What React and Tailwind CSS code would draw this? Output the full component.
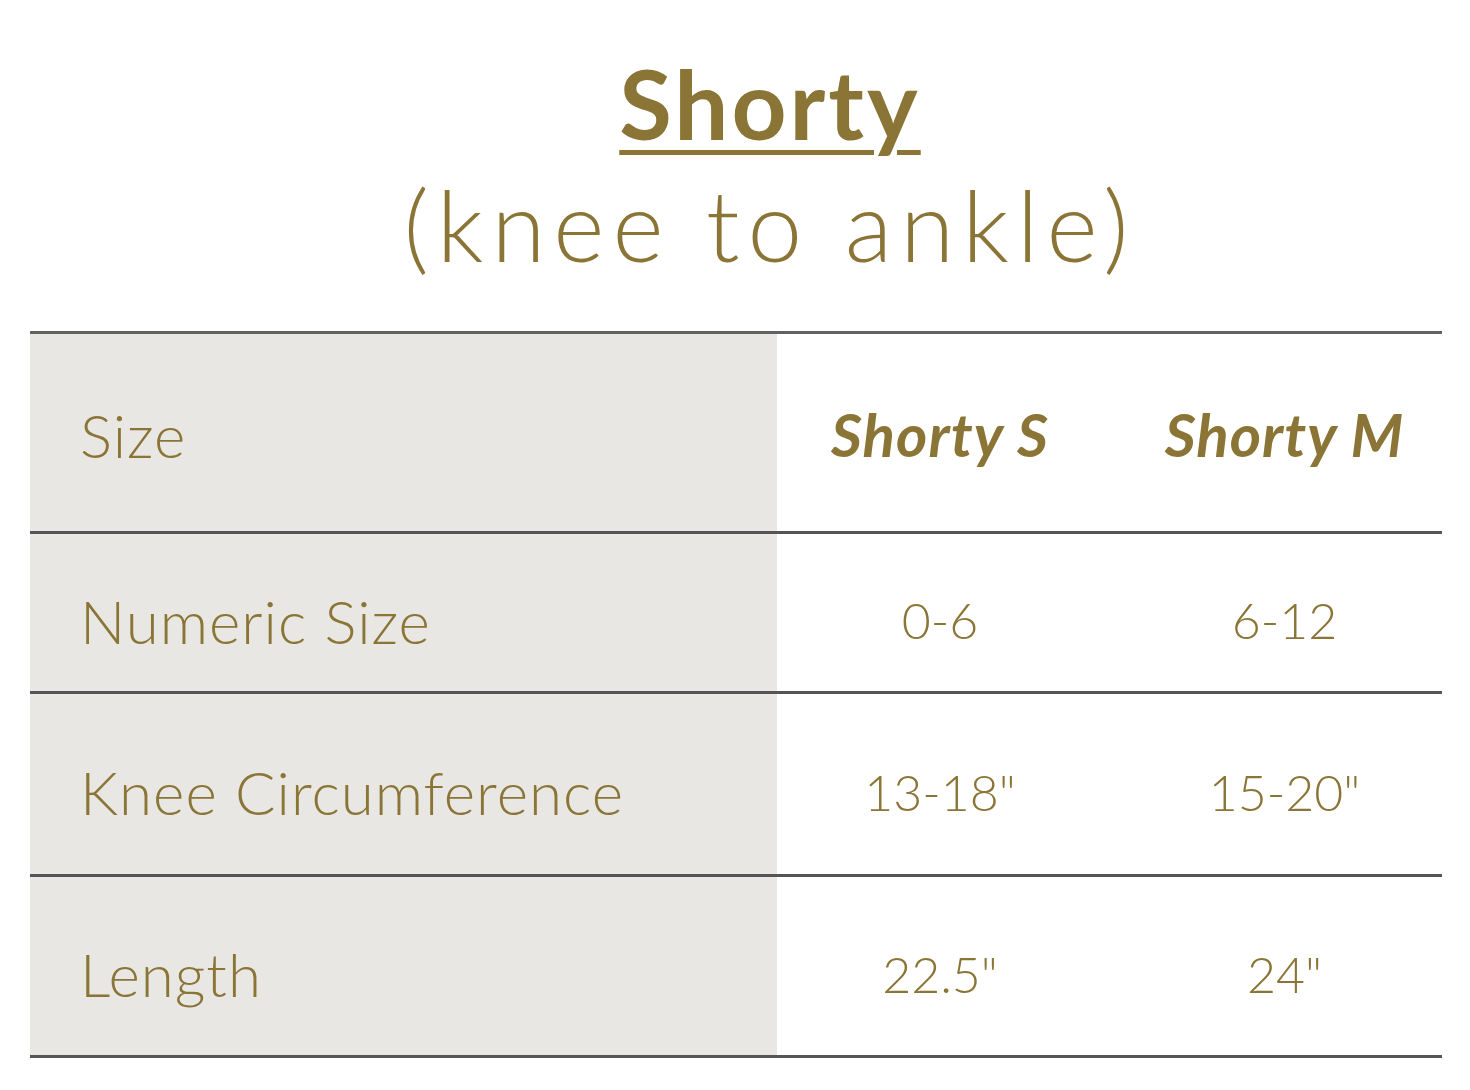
export default function App() {
  const rows = [
    { label: "Numeric Size", s: "0-6", m: "6-12", h: "h-[160px]" },
    { label: "Knee Circumference", s: "13-18\"", m: "15-20\"", h: "h-[183px]" },
    { label: "Length", s: "22.5\"", m: "24\"", h: "h-[181px]" },
  ];

  return (
    <div className="w-[1470px] h-[1090px] bg-white text-[#8b7536] font-['Lato','Liberation_Sans',sans-serif] overflow-hidden">
      {/* Title */}
      <div className="pt-[48px] pl-[70px] flex flex-col items-center">
        <h1 className="text-[96px] leading-[110px] font-bold underline decoration-[5px] underline-offset-[10px] tracking-[3px]">
          Shorty
        </h1>
        <p className="text-[98px] leading-[120px] font-light tracking-[8px] mt-[6px]">
          (knee to ankle)
        </p>
      </div>

      {/* Size table */}
      <div className="mt-[47px] ml-[30px] w-[1412px] border-t-[3px] border-[#626262]">
        <div className="grid grid-cols-[747px_326px_339px] h-[200px] items-center border-b-[3px] border-[#555]">
          <div className="h-full bg-[#e9e7e4] flex items-center pl-[50px] text-[60px] tracking-[1px] font-light pt-[4px]">
            Size
          </div>
          <div className="text-center text-[60px] tracking-[1px] font-bold italic pt-[2px]">Shorty S</div>
          <div className="text-center text-[60px] tracking-[1px] font-bold italic pt-[2px] pl-[24px]">Shorty M</div>
        </div>
        {rows.map((r) => (
          <div
            key={r.label}
            className={`grid grid-cols-[747px_326px_339px] ${r.h} items-center border-b-[3px] border-[#555]`}
          >
            <div className="h-full bg-[#e9e7e4] flex items-center pl-[50px] text-[60px] tracking-[1px] font-light pt-[16px]">
              {r.label}
            </div>
            <div className="text-center text-[50px] font-light pt-[16px]">{r.s}</div>
            <div className="text-center text-[50px] font-light pt-[16px] pl-[24px]">{r.m}</div>
          </div>
        ))}
      </div>
    </div>
  );
}
